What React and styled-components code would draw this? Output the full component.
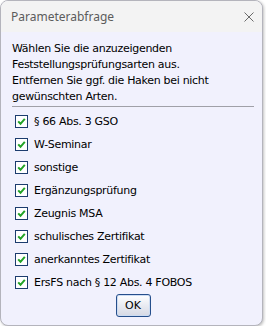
import React from "react";
import styled, { createGlobalStyle } from "styled-components";

const Global = createGlobalStyle`
  html, body { margin: 0; padding: 0; background: #ffffff; }
  body { font-family: "DejaVu Sans", sans-serif; }
`;

const Window = styled.div`
  box-sizing: border-box;
  width: 263px;
  height: 326px;
  border: 1px solid #b4b4bc;
  border-radius: 8px;
  background: #f1f1fd;
  box-shadow: 1px 1px 3px rgba(0, 0, 0, 0.25);
  display: flex;
  flex-direction: column;
  overflow: hidden;
`;

const TitleBar = styled.div`
  height: 31px;
  flex: 0 0 31px;
  background: #f3f3f3;
  display: flex;
  align-items: center;
  justify-content: space-between;
  padding: 0 8px 0 10px;
`;

const Title = styled.span`
  font-family: "Noto Sans", sans-serif;
  font-size: 12px;
  color: #5c5c5c;
`;

const Close = styled.svg`
  width: 10px;
  height: 10px;
`;

const Body = styled.div`
  flex: 1;
  display: flex;
  flex-direction: column;
  padding: 9px 8px 0 11px;
`;

const Intro = styled.p`
  margin: 0;
  font-family: "DejaVu Sans", sans-serif;
  font-size: 11px;
  letter-spacing: -0.3px;
  line-height: 16px;
  color: #000;
`;

const Separator = styled.div`
  height: 1px;
  background: #a0a0a8;
  margin-top: 1px;
`;

const List = styled.div`
  display: flex;
  flex-direction: column;
  padding-top: 3px;
`;

const Row = styled.label`
  height: 23px;
  display: flex;
  align-items: center;
  gap: 6px;
  padding-left: 3px;
  font-family: "DejaVu Sans", sans-serif;
  font-size: 11px;
  letter-spacing: -0.3px;
  color: #000;
  cursor: default;
`;

const Box = styled.span`
  box-sizing: border-box;
  width: 13px;
  height: 13px;
  border: 1px solid #1c3c6e;
  background: #fff;
  display: flex;
  align-items: center;
  justify-content: center;
`;

const Footer = styled.div`
  display: flex;
  justify-content: center;
  padding-top: 0;
`;

const OkButton = styled.button`
  box-sizing: border-box;
  width: 35px;
  height: 23px;
  border: 1px solid #264f8c;
  border-radius: 3px;
  background: linear-gradient(#ffffff, #e9ebf2 50%, #d6d9e4);
  box-shadow: inset 0 0 0 1px #cddcf2;
  font-family: "DejaVu Sans", sans-serif;
  font-size: 11px;
  color: #000;
  padding: 0;
`;

const items = [
  "§ 66 Abs. 3 GSO",
  "W-Seminar",
  "sonstige",
  "Ergänzungsprüfung",
  "Zeugnis MSA",
  "schulisches Zertifikat",
  "anerkanntes Zertifikat",
  "ErsFS nach § 12 Abs. 4 FOBOS",
];

const Check = () => (
  <svg width="9" height="9" viewBox="0 0 9 9">
    <path d="M1.2 4.4 L3.5 6.8 L7.8 1.8" fill="none" stroke="#22a326" strokeWidth="2" />
  </svg>
);

export default function App() {
  return (
    <>
      <Global />
      <Window>
        <TitleBar>
          <Title>Parameterabfrage</Title>
          <Close viewBox="0 0 10 10">
            <path d="M0.5 0.5 L9.5 9.5 M9.5 0.5 L0.5 9.5" stroke="#6a6a6a" strokeWidth="1" fill="none" />
          </Close>
        </TitleBar>
        <Body>
          <Intro>
            Wählen Sie die anzuzeigenden
            <br />
            Feststellungsprüfungsarten aus.
            <br />
            Entfernen Sie ggf. die Haken bei nicht
            <br />
            gewünschten Arten.
          </Intro>
          <Separator />
          <List>
            {items.map((t) => (
              <Row key={t}>
                <Box>
                  <Check />
                </Box>
                {t}
              </Row>
            ))}
          </List>
          <Footer>
            <OkButton>OK</OkButton>
          </Footer>
        </Body>
      </Window>
    </>
  );
}
